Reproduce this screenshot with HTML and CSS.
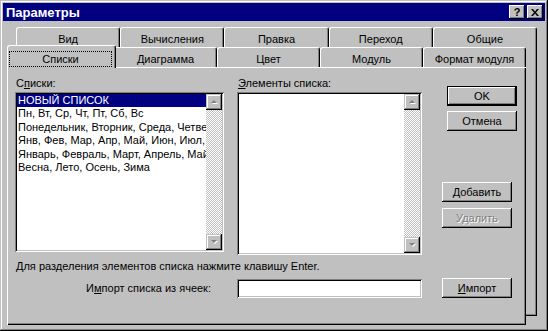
FILE: index.html
```html
<!DOCTYPE html>
<html lang="ru">
<head>
    <meta charset="UTF-8">
    <title>Параметры</title>
    <link rel="stylesheet" href="styles.css">
</head>
<body>
    <div class="window">
        <div class="titlebar">
            <span class="title">Параметры</span>
            <span class="tbtn help">?</span>
            <span class="tbtn close">
                <svg width="8" height="7" viewBox="0 0 8 7"><path d="M0 0h2l2 2.5L6 0h2L5 3.5 8 7H6L4 4.5 2 7H0l3-3.5z" fill="#000"/></svg>
            </span>
        </div>

        <!-- две строки вкладок -->
        <div class="row back">
            <div class="tab">Вид</div>
            <div class="tab">Вычисления</div>
            <div class="tab">Правка</div>
            <div class="tab">Переход</div>
            <div class="tab">Общие</div>
        </div>
        <div class="row front">
            <div class="tab active"><span class="focus">Списки</span></div>
            <div class="tab">Диаграмма</div>
            <div class="tab">Цвет</div>
            <div class="tab">Модуль</div>
            <div class="tab">Формат модуля</div>
        </div>

        <div class="sheet">
            <div class="main">
                <div class="col1">
                    <div class="label">С<u>п</u>иски:</div>
                    <div class="listbox lists">
                        <div class="items">
                            <div class="item selected">НОВЫЙ СПИСОК</div>
                            <div class="item">Пн, Вт, Ср, Чт, Пт, Сб, Вс</div>
                            <div class="item">Понедельник, Вторник, Среда, Четверг, Пятница, Суббота, Воскресенье</div>
                            <div class="item">Янв, Фев, Мар, Апр, Май, Июн, Июл, Авг, Сен, Окт, Ноя, Дек</div>
                            <div class="item">Январь, Февраль, Март, Апрель, Май, Июнь, Июль</div>
                            <div class="item">Весна, Лето, Осень, Зима</div>
                        </div>
                        <div class="scroll">
                            <div class="sbtn"><svg width="7" height="5" viewBox="0 0 7 5"><path d="M1 4h6L4 1z" fill="#fff"/><path d="M0 3h6L3 0z" fill="#808080"/></svg></div>
                            <div class="track"></div>
                            <div class="sbtn"><svg width="7" height="5" viewBox="0 0 7 5"><path d="M1 1h6L4 4z" fill="#fff"/><path d="M0 0h6L3 3z" fill="#808080"/></svg></div>
                        </div>
                    </div>
                </div>
                <div class="col2">
                    <div class="label"><u>Э</u>лементы списка:</div>
                    <div class="listbox elems">
                        <div class="items"></div>
                        <div class="scroll">
                            <div class="sbtn"><svg width="7" height="5" viewBox="0 0 7 5"><path d="M1 4h6L4 1z" fill="#fff"/><path d="M0 3h6L3 0z" fill="#808080"/></svg></div>
                            <div class="track"></div>
                            <div class="sbtn"><svg width="7" height="5" viewBox="0 0 7 5"><path d="M1 1h6L4 4z" fill="#fff"/><path d="M0 0h6L3 3z" fill="#808080"/></svg></div>
                        </div>
                    </div>
                </div>
                <div class="col3">
                    <div class="btn default">OK</div>
                    <div class="btn cancel">Отмена</div>
                    <div class="btn add"><u>Д</u>обавить</div>
                    <div class="btn remove disabled">Удалить</div>
                </div>
            </div>
            <div class="hint">Для разделения элементов списка нажмите клавишу Enter.</div>
            <div class="import">
                <span class="import-label">И<u>м</u>порт списка из ячеек:</span>
                <span class="field"></span>
                <div class="btn"><u>И</u>мпорт</div>
            </div>
        </div>
    </div>
</body>
</html>
```

FILE: styles.css
```css
body {
    margin: 0;
    background-color: #c0c0c0;
    font-family: "Liberation Sans", Arial, sans-serif;
    font-size: 11px;
    color: #000;
}
u {
    text-decoration: underline;
    text-underline-offset: 1px;
}
.window {
    position: relative;
    z-index: 0;
    width: 548px;
    height: 331px;
    box-sizing: border-box;
    padding: 3px;
    background-color: #c0c0c0;
    box-shadow: inset -1px -1px #000, inset 1px 1px #c0c0c0, inset -2px -2px #808080, inset 2px 2px #fff;
}
.titlebar {
    height: 18px;
    background-color: #000080;
    color: #fff;
    display: flex;
    align-items: center;
    padding: 0 2px 0 3px;
}
.title {
    font-weight: bold;
    font-size: 13px;
    flex-grow: 1;
}
.tbtn {
    width: 16px;
    height: 14px;
    box-sizing: border-box;
    background-color: #c0c0c0;
    color: #000;
    box-shadow: inset -1px -1px #000, inset 1px 1px #fff, inset -2px -2px #808080;
    display: flex;
    align-items: center;
    justify-content: center;
    font-weight: bold;
    font-size: 11px;
}
.help {
    margin-right: 2px;
}
.row {
    display: flex;
    height: 20px;
}
.row.back {
    margin: 6px 0 0 13px;
    width: 521px;
}
.row.front {
    margin-left: 6px;
    width: 517px;
}
.tab {
    flex: 1;
    height: 20px;
    box-sizing: border-box;
    border-top: 1px solid #fff;
    border-left: 1px solid #fff;
    border-right: 1px solid #000;
    border-radius: 3px 3px 0 0;
    box-shadow: inset -1px 0 #808080;
    background-color: #c0c0c0;
    display: flex;
    justify-content: center;
    padding-top: 5px;
}
.tab.active {
    position: relative;
    z-index: 1;
    height: 23px;
    margin: -2px -2px -1px -2px;
    padding: 6px 4px 0 2px;
}
.focus {
    flex-grow: 1;
    height: 14px;
    line-height: 14px;
    text-align: center;
    outline: 1px dotted #000;
}
.sheet {
    position: relative;
    margin-left: 4px;
    width: 519px;
    height: 258px;
    box-sizing: border-box;
    padding: 10px 0 0 8px;
    background-color: #c0c0c0;
    box-shadow: inset 1px 1px #fff, inset -1px -1px #000, inset -2px -2px #808080;
}
/* страница за текущей */
.sheet::before {
    content: "";
    position: absolute;
    z-index: -1;
    left: 9px;
    top: -20px;
    right: -11px;
    bottom: 9px;
    border-right: 1px solid #000;
    border-bottom: 1px solid #000;
    box-shadow: inset -1px -1px #808080;
}
.main {
    display: flex;
}
.label {
    height: 13px;
    line-height: 13px;
    margin-bottom: 2px;
    padding-left: 1px;
}
.col1 {
    width: 209px;
}
.col2 {
    width: 185px;
    margin-left: 13px;
}
.col3 {
    width: 75px;
    margin-left: 20px;
}
.listbox {
    display: flex;
    box-sizing: border-box;
    padding: 2px;
    background-color: #fff;
    box-shadow: inset 1px 1px #808080, inset -1px -1px #fff, inset 2px 2px #000, inset -2px -2px #c0c0c0;
}
.lists {
    height: 160px;
}
.elems {
    height: 163px;
}
.items {
    flex: 1;
    overflow: hidden;
}
.item {
    height: 13.4px;
    line-height: 13.4px;
    padding-left: 1px;
    white-space: nowrap;
    overflow: hidden;
}
.item.selected {
    background-color: #000080;
    color: #fff;
}
.scroll {
    width: 16px;
    display: flex;
    flex-direction: column;
}
.sbtn {
    height: 16px;
    box-sizing: border-box;
    background-color: #c0c0c0;
    box-shadow: inset -1px -1px #000, inset 1px 1px #c0c0c0, inset -2px -2px #808080, inset 2px 2px #fff;
    display: flex;
    align-items: center;
    justify-content: center;
}
.track {
    flex: 1;
    background: repeating-conic-gradient(#c0c0c0 0 25%, #fff 0 50%) 0 0 / 2px 2px;
}
.btn {
    width: 70px;
    height: 20px;
    box-sizing: border-box;
    background-color: #c0c0c0;
    box-shadow: inset -1px -1px #000, inset 1px 1px #fff, inset -2px -2px #808080;
    display: flex;
    align-items: center;
    justify-content: center;
}
.btn.default {
    margin: 9px 0 0 5px;
    border: 1px solid #000;
}
.btn.cancel {
    margin: 5px 0 0 5px;
}
.btn.add {
    margin-top: 51px;
}
.btn.remove {
    margin-top: 6px;
}
.btn.disabled {
    color: #808080;
    text-shadow: 1px 1px #fff;
}
.hint {
    height: 13px;
    line-height: 13px;
    margin-top: 5px;
    padding-left: 1px;
}
.import {
    display: flex;
    align-items: center;
    margin-top: 5px;
}
.import-label {
    width: 196px;
    text-align: right;
}
.field {
    width: 185px;
    height: 19px;
    margin-left: 26px;
    box-sizing: border-box;
    background-color: #fff;
    box-shadow: inset 1px 1px #808080, inset -1px -1px #fff, inset 2px 2px #000, inset -2px -2px #c0c0c0;
}
.import .btn {
    margin-left: 20px;
}
```
